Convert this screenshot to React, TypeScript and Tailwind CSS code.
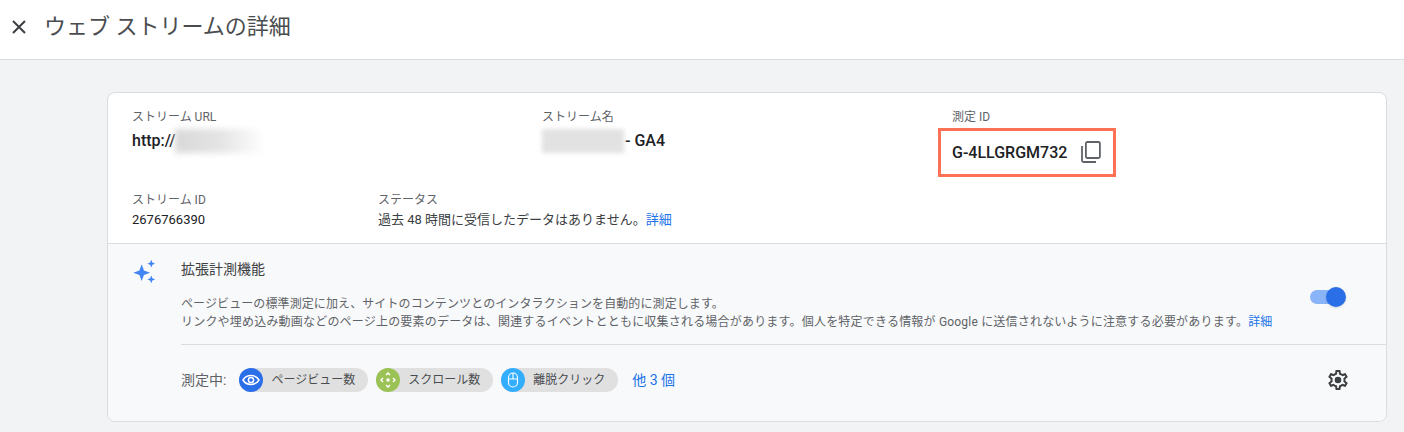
const font = "font-['Roboto','Noto_Sans_CJK_JP',sans-serif]";

function Chip({ color, label, icon }: { color: string; label: string; icon: React.ReactNode }) {
  return (
    <div className="flex h-6 items-center rounded-full bg-[#e0e0e0] pr-[13px]">
      <div className={`flex h-6 w-6 items-center justify-center rounded-full ${color}`}>{icon}</div>
      <span className="ml-2 text-xs leading-6 text-[#4a4d50]">{label}</span>
    </div>
  );
}

function CloseIcon() {
  return (
    <svg width="16" height="16" viewBox="0 0 16 16" fill="none" stroke="#3c4043" strokeWidth="2">
      <path d="M2 2l12 12M14 2 2 14" />
    </svg>
  );
}

function CopyIcon() {
  return (
    <svg width="20" height="22" viewBox="0 0 20 22" fill="none" stroke="#5f6368" strokeWidth="1.8">
      <rect x="4.900" y="1" width="14" height="16" rx="1.500" />
      <path d="M1 5v14.500A1.500 1.500 0 0 0 2.500 21H15" />
    </svg>
  );
}

function EyeIcon() {
  return (
    <svg width="18" height="18" viewBox="0 0 18 18" fill="none" stroke="white">
      <path d="M1 9c3.500-6 12.500-6 16 0-3.500 6-12.500 6-16 0z" strokeWidth="1.500" />
      <circle cx="9" cy="9" r="2.600" strokeWidth="1.500" />
    </svg>
  );
}

function ScrollIcon() {
  return (
    <svg width="16" height="16" viewBox="0 0 16 16" fill="none" stroke="white" strokeWidth="1.500">
      <path d="M6 3 8 1l2 2M6 13l2 2 2-2M3 6 1 8l2 2M13 6l2 2-2 2" />
      <circle cx="8" cy="8" r="1.800" fill="white" stroke="none" />
    </svg>
  );
}

function MouseIcon() {
  return (
    <svg width="16" height="16" viewBox="0 0 16 16" fill="none" stroke="white" strokeWidth="1.100">
      <rect x="3.500" y="1" width="9" height="14" rx="4.500" />
      <path d="M3.500 7h9M8 1v6" />
    </svg>
  );
}

function Sparkle() {
  return (
    <svg width="27" height="27" viewBox="0 0 24 24" fill="#4285f4">
      <path d="M9.500 5.500 11.500 11 17 13l-5.500 2-2 5.500-2-5.500L2 13l5.500-2z" />
      <path d="M18 1.500 19 4l2.500 1-2.500 1-1 2.500L17 6l-2.500-1L17 4z" />
      <path d="M18 15.500 19 18l2.500 1-2.500 1-1 2.500L17 20l-2.500-1 2.500-1z" />
    </svg>
  );
}

function GearIcon() {
  return (
    <svg width="24" height="24" viewBox="0 0 24 24" fill="#3c4043">
      <path d="M19.430 12.980c.04-.32.07-.64.07-.98 0-.34-.03-.66-.07-.98l2.110-1.650c.19-.15.24-.42.12-.64l-2-3.460c-.09-.16-.26-.25-.44-.25-.06 0-.12.01-.17.03l-2.490 1c-.52-.4-1.080-.73-1.690-.98l-.38-2.650C14.460 2.180 14.250 2 14 2h-4c-.25 0-.46.18-.49.42l-.38 2.650c-.61.25-1.170.59-1.690.98l-2.490-1c-.06-.02-.12-.03-.18-.03-.17 0-.34.09-.43.25l-2 3.460c-.13.22-.07.49.12.64l2.110 1.650c-.04.32-.07.65-.07.98 0 .33.03.66.07.98l-2.110 1.650c-.19.15-.24.42-.12.64l2 3.460c.09.16.26.25.44.25.06 0 .12-.01.17-.03l2.490-1c.52.4 1.080.73 1.690.98l.38 2.650c.03.24.24.42.49.42h4c.25 0 .46-.18.49-.42l.38-2.650c.61-.25 1.170-.59 1.690-.98l2.490 1c.06.02.12.03.18.03.17 0 .34-.09.43-.25l2-3.460c.12-.22.07-.49-.12-.64l-2.110-1.650zm-1.980-1.710c.04.31.05.52.05.73 0 .21-.02.43-.05.73l-.14 1.130.89.7 1.080.84-.7 1.210-1.270-.51-1.040-.42-.9.68c-.43.32-.84.56-1.250.73l-1.060.43-.16 1.130-.2 1.350h-1.400l-.19-1.350-.16-1.130-1.060-.43c-.43-.18-.83-.41-1.230-.71l-.91-.7-1.060.43-1.270.51-.7-1.210 1.080-.84.89-.7-.14-1.130c-.03-.31-.05-.54-.05-.74s.02-.43.05-.73l.14-1.130-.89-.7-1.080-.84.7-1.210 1.270.51 1.040.42.9-.68c.43-.32.84-.56 1.250-.73l1.060-.43.16-1.130.2-1.350h1.390l.19 1.350.16 1.130 1.060.43c.43.18.83.41 1.230.71l.91.7 1.060-.43 1.270-.51.7 1.210-1.070.85-.89.7.14 1.130z" />
      <circle cx="12" cy="12" r="3.300" />
    </svg>
  );
}

export default function App() {
  return (
    <div className={`${font} h-[432px] w-[1404px] overflow-hidden bg-[#f1f3f4] text-[#202124]`}>
      <header className="flex h-[60px] items-center border-b border-[#dadce0] bg-white pb-[6px] pl-[11px]">
        <CloseIcon />
        <h1 className="ml-[17px] text-[22px] font-normal leading-7 text-[#4a4d50]">ウェブ ストリームの詳細</h1>
      </header>

      <main className="ml-[107px] mt-8 h-[330px] w-[1280px] overflow-hidden rounded-lg border border-[#dadce0] bg-white">
        <section className="h-[150px] pl-6 pt-[14px]">
          <div className="flex">
            <div className="w-[410px]">
              <p className="text-xs leading-5 text-[#5f6368]">ストリーム URL</p>
              <div className="mt-[2px] flex h-6 items-center text-base font-medium">
                http://
                <div className="h-6 w-[90px] bg-gradient-to-r from-[#d8d8d8] via-[#e4e4e4] to-white blur-[3px]" />
              </div>
            </div>
            <div className="w-[410px]">
              <p className="text-xs leading-5 text-[#5f6368]">ストリーム名</p>
              <div className="mt-[2px] flex h-6 items-center text-base font-medium">
                <div className="h-6 w-[82px] bg-[#e2e2e2] blur-[2px]" />
                <span className="ml-[1px]">- GA4</span>
              </div>
            </div>
            <div>
              <p className="text-xs leading-5 text-[#5f6368]">測定 ID</p>
              <div className="-ml-[14px] mt-[1px] flex h-[49px] w-[178px] items-center border-[3px] border-[#ff7154] pl-[11px] text-base font-medium">
                G-4LLGRGM732
                <div className="-mt-[1px] ml-[14px]">
                  <CopyIcon />
                </div>
              </div>
            </div>
          </div>
          <div className="mt-[13px] flex">
            <div className="w-[246px]">
              <p className="text-xs leading-5 text-[#5f6368]">ストリーム ID</p>
              <p className="text-[13px] leading-[19px]">2676766390</p>
            </div>
            <div>
              <p className="text-xs leading-5 text-[#5f6368]">ステータス</p>
              <p className="text-[13px] leading-[19px] text-[#3c4043]">
                過去 48 時間に受信したデータはありません。<span className="text-[#1a73e8]">詳細</span>
              </p>
            </div>
          </div>
        </section>

        <section className="flex h-[179px] border-t border-[#dadce0] bg-[#f8f9fa]">
          <div className="w-[73px] pl-[23px] pt-[14px]">
            <Sparkle />
          </div>
          <div className="flex-1">
            <div className="flex h-[100px] pt-[15px]">
              <div className="flex-1">
                <p className="text-sm leading-5 text-[#3c4043]">拡張計測機能</p>
                <p className="mt-[16px] text-xs leading-[18px] tracking-[0.2px] text-[#5f6368]">
                  <span className="tracking-[0.1px]">ページビューの標準測定に加え、サイトのコンテンツとのインタラクションを自動的に測定します。</span>
                  <br />
                  リンクや埋め込み動画などのページ上の要素のデータは、関連するイベントとともに収集される場合があります。個人を特定できる情報が Google に送信されないように注意する必要があります。<span className="text-[#1a73e8]">詳細</span>
                </p>
              </div>
              <div className="mr-[40px] mt-[28px] flex h-5 w-[36px] items-center">
                <div className="relative h-[14px] w-[34px] rounded-full bg-[#8ab4f8]">
                  <div className="absolute -top-[3px] right-[-2px] h-5 w-5 rounded-full bg-[#2b6fe8] shadow" />
                </div>
              </div>
            </div>
            <div className="flex h-[71px] items-center border-t border-[#dadce0]">
              <span className="text-sm text-[#5f6368]">測定中:</span>
              <div className="ml-[13px] flex gap-2">
                <Chip color="bg-[#2b6fe8]" label="ページビュー数" icon={<EyeIcon />} />
                <Chip color="bg-[#9ac255]" label="スクロール数" icon={<ScrollIcon />} />
                <Chip color="bg-[#33aeff]" label="離脱クリック" icon={<MouseIcon />} />
              </div>
              <span className="ml-[14px] text-sm text-[#1a73e8]">他 3 個</span>
              <div className="ml-auto mr-[36px]">
                <GearIcon />
              </div>
            </div>
          </div>
        </section>
      </main>
    </div>
  );
}
